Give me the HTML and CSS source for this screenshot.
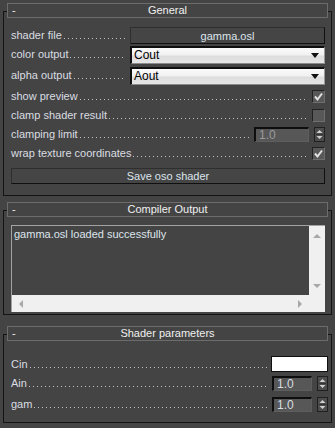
FILE: index.html
```html
<!DOCTYPE html>
<html lang="en">
<head>
    <meta charset="UTF-8">
    <meta name="viewport" content="width=device-width, initial-scale=1.0">
    <title>OSL Shader</title>
    <link rel="stylesheet" href="styles.css">
</head>
<body>
    <!-- General -->
    <div class="rollout general">
        <div class="rollout-header"><span class="toggle">-</span><span class="title">General</span><span></span></div>
        <div class="rollout-body">
            <div class="row">
                <span class="label">shader file</span>
                <button class="btn file-btn">gamma.osl</button>
            </div>
            <div class="row">
                <span class="label">color output</span>
                <div class="dropdown"><span>Cout</span><svg width="8" height="5" viewBox="0 0 8 5"><polygon points="0,0 8,0 4,5" fill="#111"/></svg></div>
            </div>
            <div class="row gap">
                <span class="label">alpha output</span>
                <div class="dropdown"><span>Aout</span><svg width="8" height="5" viewBox="0 0 8 5"><polygon points="0,0 8,0 4,5" fill="#111"/></svg></div>
            </div>
            <div class="row gap">
                <span class="label">show preview</span>
                <div class="check"><svg width="11" height="11" viewBox="0 0 11 11"><polyline points="2,5.5 4.5,8.5 9,2.5" fill="none" stroke="#e2e2e2" stroke-width="2"/></svg></div>
            </div>
            <div class="row">
                <span class="label">clamp shader result</span>
                <div class="check"></div>
            </div>
            <div class="row">
                <span class="label">clamping limit</span>
                <div class="spin-input disabled">1.0</div>
                <div class="spin-arrows"><svg width="9" height="13" viewBox="0 0 9 13"><polygon points="1.5,5 7.5,5 4.5,2" fill="#d0d0d0"/><line x1="1" y1="6.5" x2="8" y2="6.5" stroke="#333"/><polygon points="1.5,8 7.5,8 4.5,11" fill="#d0d0d0"/></svg></div>
            </div>
            <div class="row">
                <span class="label">wrap texture coordinates</span>
                <div class="check"><svg width="11" height="11" viewBox="0 0 11 11"><polyline points="2,5.5 4.5,8.5 9,2.5" fill="none" stroke="#e2e2e2" stroke-width="2"/></svg></div>
            </div>
            <button class="btn save-btn">Save oso shader</button>
        </div>
    </div>

    <!-- Compiler Output -->
    <div class="rollout compiler">
        <div class="rollout-header"><span class="toggle">-</span><span class="title">Compiler Output</span><span></span></div>
        <div class="rollout-body">
            <div class="output">
                <div class="output-text">gamma.osl loaded successfully</div>
                <div class="vscroll">
                    <svg width="8" height="5" viewBox="0 0 8 5"><polygon points="0,5 8,5 4,1" fill="#a8a8a8"/></svg>
                    <svg width="8" height="5" viewBox="0 0 8 5"><polygon points="0,0 8,0 4,4" fill="#a8a8a8"/></svg>
                </div>
                <div class="hscroll">
                    <svg width="5" height="8" viewBox="0 0 5 8"><polygon points="5,0 5,8 1,4" fill="#a8a8a8"/></svg>
                    <svg width="5" height="8" viewBox="0 0 5 8"><polygon points="0,0 0,8 4,4" fill="#a8a8a8"/></svg>
                </div>
                <div class="corner"></div>
            </div>
        </div>
    </div>

    <!-- Shader parameters -->
    <div class="rollout params">
        <div class="rollout-header"><span class="toggle">-</span><span class="title">Shader parameters</span><span></span></div>
        <div class="rollout-body">
            <div class="row tall">
                <span class="label">Cin</span>
                <div class="swatch"></div>
            </div>
            <div class="row">
                <span class="label">Ain</span>
                <div class="spin-input small">1.0</div>
                <div class="spin-arrows"><svg width="9" height="13" viewBox="0 0 9 13"><polygon points="1.5,5 7.5,5 4.5,2" fill="#d0d0d0"/><line x1="1" y1="6.5" x2="8" y2="6.5" stroke="#333"/><polygon points="1.5,8 7.5,8 4.5,11" fill="#d0d0d0"/></svg></div>
            </div>
            <div class="row gap">
                <span class="label">gam</span>
                <div class="spin-input small">1.0</div>
                <div class="spin-arrows"><svg width="9" height="13" viewBox="0 0 9 13"><polygon points="1.5,5 7.5,5 4.5,2" fill="#d0d0d0"/><line x1="1" y1="6.5" x2="8" y2="6.5" stroke="#333"/><polygon points="1.5,8 7.5,8 4.5,11" fill="#d0d0d0"/></svg></div>
            </div>
        </div>
    </div>
</body>
</html>
```

FILE: styles.css
```css
body {
    margin: 0;
    background-color: #444444;
    font-family: "Liberation Sans", Arial, sans-serif;
    font-size: 11px;
    color: #dadde2;
}

/* rollout frame: dark etched line, header sits on top of it */
.rollout {
    position: relative;
    margin: 3px 3px 0 3px;
}
.rollout::before {
    content: "";
    position: absolute;
    top: 8px;
    left: 0;
    right: 0;
    bottom: 0;
    border: 1px solid #141414;
}
.rollout-header {
    position: relative;
    z-index: 1;
    margin: 0 4px;
    height: 13px;
    line-height: 13px;
    border: 1px solid #6c6c6c;
    background-color: #444444;
    display: grid;
    grid-template-columns: 20px 1fr 20px;
    color: #f0f0f0;
}
.toggle {
    padding-left: 4px;
}
.title {
    text-align: center;
}
.rollout-body {
    position: relative;
    display: flex;
    flex-direction: column;
    padding: 8px 7px 12px 8px;
}

.compiler {
    margin-top: 6px;
}
.compiler .rollout-body {
    padding-bottom: 3px;
}
.params {
    margin-top: 11px;
}
.params .rollout-body {
    padding: 13px 4px 9px 8px;
}

/* label rows with dotted leaders */
.row {
    display: flex;
    align-items: center;
    height: 19px;
}
.row.gap {
    margin-top: 2px;
}
.row.tall {
    height: 20px;
}
.label {
    flex: 1;
    display: flex;
    align-items: baseline;
    white-space: nowrap;
    min-width: 0;
    line-height: 13px;
}
.label::after {
    content: "";
    flex: 1;
    height: 1px;
    margin: 0 4px 0 2px;
    background-image: linear-gradient(to right, #bcc6cf 1px, transparent 1px);
    background-size: 4px 1px;
}

.btn {
    font: inherit;
    color: #dce4ec;
    background-color: #454545;
    border: 1px solid;
    border-color: #2e2e2e #101010 #101010 #2e2e2e;
    padding: 0;
    box-sizing: border-box;
}
.file-btn {
    width: 195px;
    height: 17px;
}
.save-btn {
    margin-top: 5px;
    height: 16px;
    width: 100%;
}

.dropdown {
    width: 195px;
    height: 18px;
    box-sizing: border-box;
    border-top: 2px solid #101010;
    border-left: 2px solid #101010;
    border-right: 1px solid #9a9a9a;
    border-bottom: 1px solid #8a8a8a;
    background: linear-gradient(#fbfbfb 0%, #f1f1f1 45%, #dddddd 55%, #e6e6e6 100%);
    color: #000;
    display: flex;
    align-items: center;
    justify-content: space-between;
    padding: 0 5px 0 2px;
    font-size: 12px;
}

.check {
    width: 13px;
    height: 13px;
    box-sizing: border-box;
    border: 1px solid;
    border-color: #222 #6e6e6e #6e6e6e #222;
    background-color: #585858;
    display: flex;
    align-items: center;
    justify-content: center;
}

.spin-input {
    width: 55px;
    height: 15px;
    box-sizing: border-box;
    border-top: 2px solid #0e0e0e;
    border-left: 2px solid #0e0e0e;
    border-right: 1px solid #5e5e5e;
    border-bottom: 1px solid #5e5e5e;
    background-color: #575757;
    color: #d8dde2;
    padding-left: 3px;
    line-height: 12px;
    font-size: 12px;
}
.spin-input.disabled {
    color: #9c9c9c;
}
.spin-input.small {
    width: 40px;
}
.spin-arrows {
    width: 11px;
    height: 15px;
    box-sizing: border-box;
    margin-left: 5px;
    border: 1px solid #202020;
    background-color: #4c4c4c;
    display: flex;
}

.swatch {
    width: 57px;
    height: 16px;
    box-sizing: border-box;
    border: 1px solid #111;
    background-color: #fff;
}

/* compiler output text box */
.output {
    height: 87px;
    box-sizing: border-box;
    border-top: 1px solid #a3a3a3;
    border-left: 1px solid #a3a3a3;
    display: grid;
    grid-template-columns: 1fr 16px;
    grid-template-rows: 1fr 17px;
}
.output-text {
    padding: 2px 2px;
    line-height: 13px;
    color: #dde4ec;
}
.vscroll {
    background-color: #f0f0f0;
    display: flex;
    flex-direction: column;
    justify-content: space-between;
    align-items: center;
    padding: 7px 0 6px;
}
.hscroll {
    background-color: #f0f0f0;
    display: flex;
    justify-content: space-between;
    align-items: center;
    padding: 0 6px 0 6px;
}
.corner {
    background-color: #f0f0f0;
}
```
